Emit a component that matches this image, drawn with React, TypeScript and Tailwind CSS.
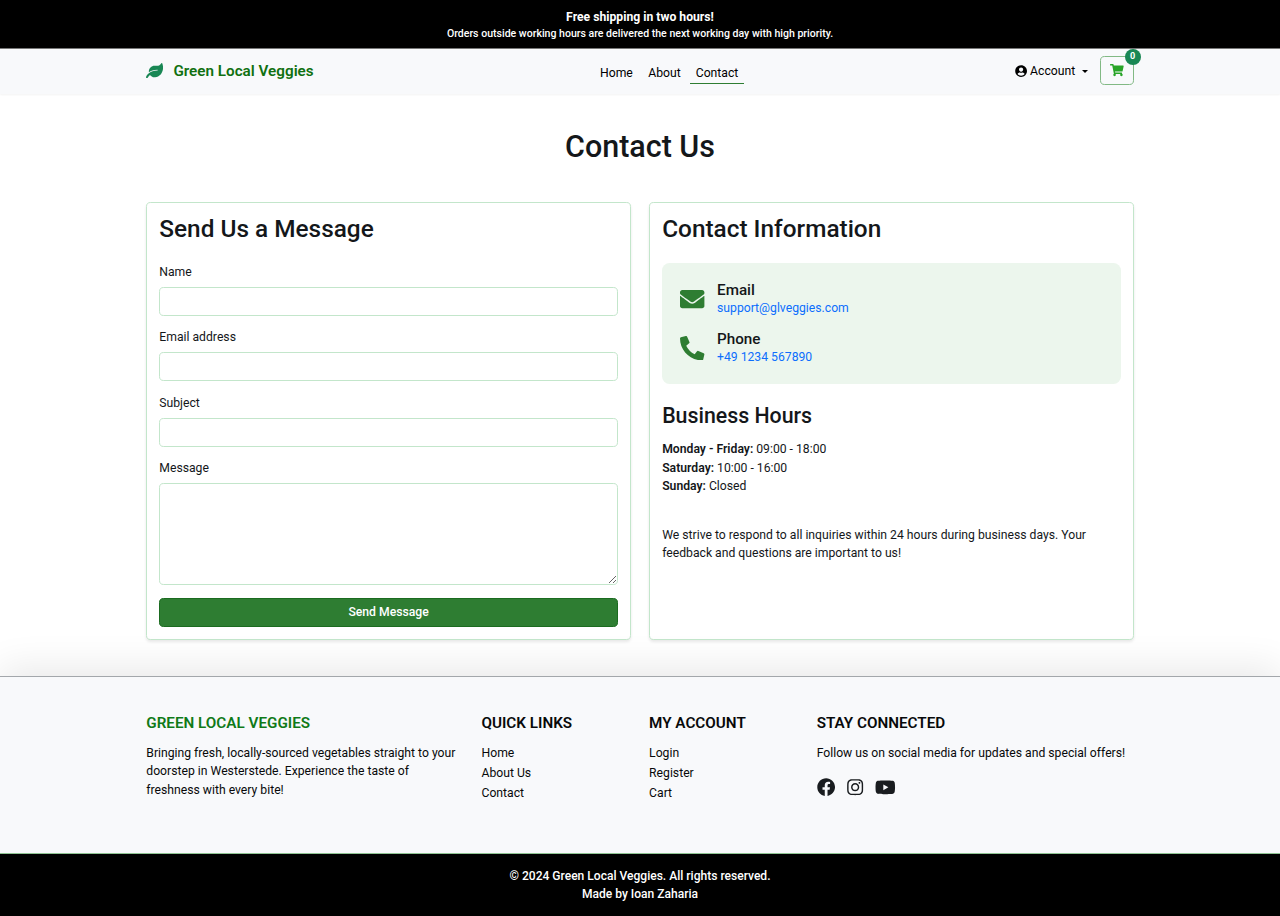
import type { ReactNode } from "react";
import { FaEnvelope, FaFacebook, FaInstagram, FaLeaf, FaPhoneAlt, FaShoppingCart, FaUserCircle, FaYoutube } from "react-icons/fa";

function Field({ label }: { label: string }) {
  return (
    <label className="block h-[65.5px]">
      <span className="block h-[24.2px] leading-[18.3px]">{label}</span>
      <input className="block h-[29px] w-full rounded-[4.6px] border border-[#c3e6cb] bg-white px-2 outline-none" />
    </label>
  );
}

function Card({ title, children }: { title: string; children: ReactNode }) {
  return (
    <section className="h-[438px] flex-1 rounded-[4.6px] border border-[#c3e6cb] bg-white px-[12px] pt-[11px] shadow-[0_2px_3px_rgba(0,0,0,0.09)]">
      <h2 className="mb-[19.4px] text-[24.38px] leading-[29.2px] font-medium">{title}</h2>
      {children}
    </section>
  );
}

function LinkColumn({ title, links }: { title: string; links: string[] }) {
  return (
    <div className="w-[167.6px] shrink-0">
      <h5 className="mb-[12px] text-[15.24px] leading-[18.3px] font-semibold">{title}</h5>
      <ul>
        {links.map((link) => (
          <li key={link} className="h-[19.9px] leading-[18.3px]">
            <a href="#">{link}</a>
          </li>
        ))}
      </ul>
    </div>
  );
}

export default function App() {
  return (
    <div className="flex h-[916px] flex-col overflow-hidden bg-white font-['Roboto',sans-serif] text-[12.19px] leading-[18.3px] text-[#14171a]">
      <div className="h-[49px] shrink-0 border-b border-[#777] bg-black pt-[8px] text-center text-white">
        <p className="text-[12.19px] leading-[18.3px] font-bold">Free shipping in two hours!</p>
        <p className="text-[10.55px] leading-[16px] font-medium">
          Orders outside working hours are delivered the next working day with high priority.
        </p>
      </div>

      <nav className="flex h-[44.5px] shrink-0 justify-between bg-[#f8f9fb] px-[146.3px] text-black shadow-[0_1px_2px_rgba(0,0,0,0.05)]">
        <a href="#" className="flex w-[453.7px] items-center pb-[1px]">
          <FaLeaf className="mr-[10px] h-[15.2px] w-[17.1px] text-[#198754]" />
          <span className="text-[15.24px] font-semibold text-[#107010]">Green Local Veggies</span>
        </a>
        <div className="flex flex-1 pt-[15px]">
          <a href="#" className="mr-[15.5px]">Home</a>
          <a href="#" className="mr-[9px]">About</a>
          <a href="#" className="h-[20px] border-b border-[#2e7d32] px-[6px]">Contact</a>
        </div>
        <div className="flex pt-[7px]">
          <a href="#" className="mr-[12px] flex h-[30px] items-center">
            <FaUserCircle className="mr-[3px] h-[12.2px] w-[12.2px]" />
            Account
            <span className="ml-[6.5px] border-x-[3.6px] border-t-[3.6px] border-x-transparent border-t-black" />
          </a>
          <button className="relative flex h-[29px] w-[34px] items-center justify-center rounded-[4.6px] border border-[#81b984]">
            <FaShoppingCart className="h-[12.2px] w-[13.7px] text-[#28a428]" />
            <span className="absolute -top-[8px] -right-[8px] flex h-[16px] w-[16px] items-center justify-center rounded-full bg-[#198754] text-[9.14px] leading-none font-bold text-white">
              0
            </span>
          </button>
        </div>
      </nav>

      <main className="h-[582.5px] shrink-0 px-[146.3px] pt-[35px]">
        <h1 className="mb-[37px] text-center text-[30.48px] leading-[36.6px] font-medium">Contact Us</h1>
        <div className="flex gap-[18.3px]">
          <Card title="Send Us a Message">
            <Field label="Name" />
            <Field label="Email address" />
            <Field label="Subject" />
            <label className="block">
              <span className="block h-[24.2px] leading-[18.3px]">Message</span>
              <textarea className="block h-[102px] w-full resize-y rounded-[4.6px] border border-[#c3e6cb] bg-white outline-none" />
            </label>
            <button className="mt-[12.4px] h-[29px] w-full rounded-[4.6px] border border-[#1b6b20] bg-[#2e7d32] font-medium text-white">
              Send Message
            </button>
          </Card>
          <Card title="Contact Information">
            <div className="h-[121.5px] rounded-[7.6px] bg-[#ecf6ed] pt-[18.3px] pl-[18.3px]">
              {[
                { title: "Email", value: "support@glveggies.com", Icon: FaEnvelope },
                { title: "Phone", value: "+49 1234 567890", Icon: FaPhoneAlt },
              ].map(({ title, value, Icon }) => (
                <div key={title} className="mb-[12.2px] flex h-[36.6px] items-center">
                  <Icon className="mr-[12.2px] h-[24.4px] w-[24.4px] text-[#2e7d32]" />
                  <div>
                    <h5 className="text-[15.24px] leading-[18.3px] font-medium">{title}</h5>
                    <a href="#" className="block leading-[18.3px] text-[#0d6efd]">{value}</a>
                  </div>
                </div>
              ))}
            </div>
            <h3 className="mt-[18.7px] mb-[11.8px] text-[21.33px] leading-[25.6px] font-medium">Business Hours</h3>
            <p><strong className="font-semibold">Monday - Friday:</strong> 09:00 - 18:00</p>
            <p><strong className="font-semibold">Saturday:</strong> 10:00 - 16:00</p>
            <p><strong className="font-semibold">Sunday:</strong> Closed</p>
            <p className="mt-[30.7px]">
              We strive to respond to all inquiries within 24 hours during business days. Your<br />
              feedback and questions are important to us!
            </p>
          </Card>
        </div>
      </main>

      <footer className="flex flex-1 flex-col">
        <div className="flex h-[177px] border-t border-[#a3a7ab] bg-[#f8f9fb] px-[146.3px] pt-[36.8px] text-[#08090a] shadow-[0_-8px_36px_rgba(0,0,0,0.09)]">
          <div className="w-[335.2px] shrink-0">
            <h5 className="mb-[12px] text-[15.24px] leading-[18.3px] font-semibold text-[#107a18]">GREEN LOCAL VEGGIES</h5>
            <p>
              Bringing fresh, locally-sourced vegetables straight to your<br />
              doorstep in Westerstede. Experience the taste of<br />
              freshness with every bite!
            </p>
          </div>
          <LinkColumn title="QUICK LINKS" links={["Home", "About Us", "Contact"]} />
          <LinkColumn title="MY ACCOUNT" links={["Login", "Register", "Cart"]} />
          <div className="whitespace-nowrap">
            <h5 className="mb-[12px] text-[15.24px] leading-[18.3px] font-semibold">STAY CONNECTED</h5>
            <p>Follow us on social media for updates and special offers!</p>
            <div className="mt-[14.8px] flex items-center text-[#191c1f]">
              <FaFacebook className="mr-[11.2px] h-[18.3px] w-[18.3px]" />
              <FaInstagram className="mr-[11px] h-[18.3px] w-[18.3px]" />
              <FaYoutube className="h-[20.6px] w-[20.6px]" />
            </div>
          </div>
        </div>
        <div className="flex-1 border-t border-[#8fc493] bg-black pt-[12.5px] text-center text-[12.05px] font-medium text-white">
          <p>© 2024 Green Local Veggies. All rights reserved.</p>
          <p>Made by Ioan Zaharia</p>
        </div>
      </footer>
    </div>
  );
}
